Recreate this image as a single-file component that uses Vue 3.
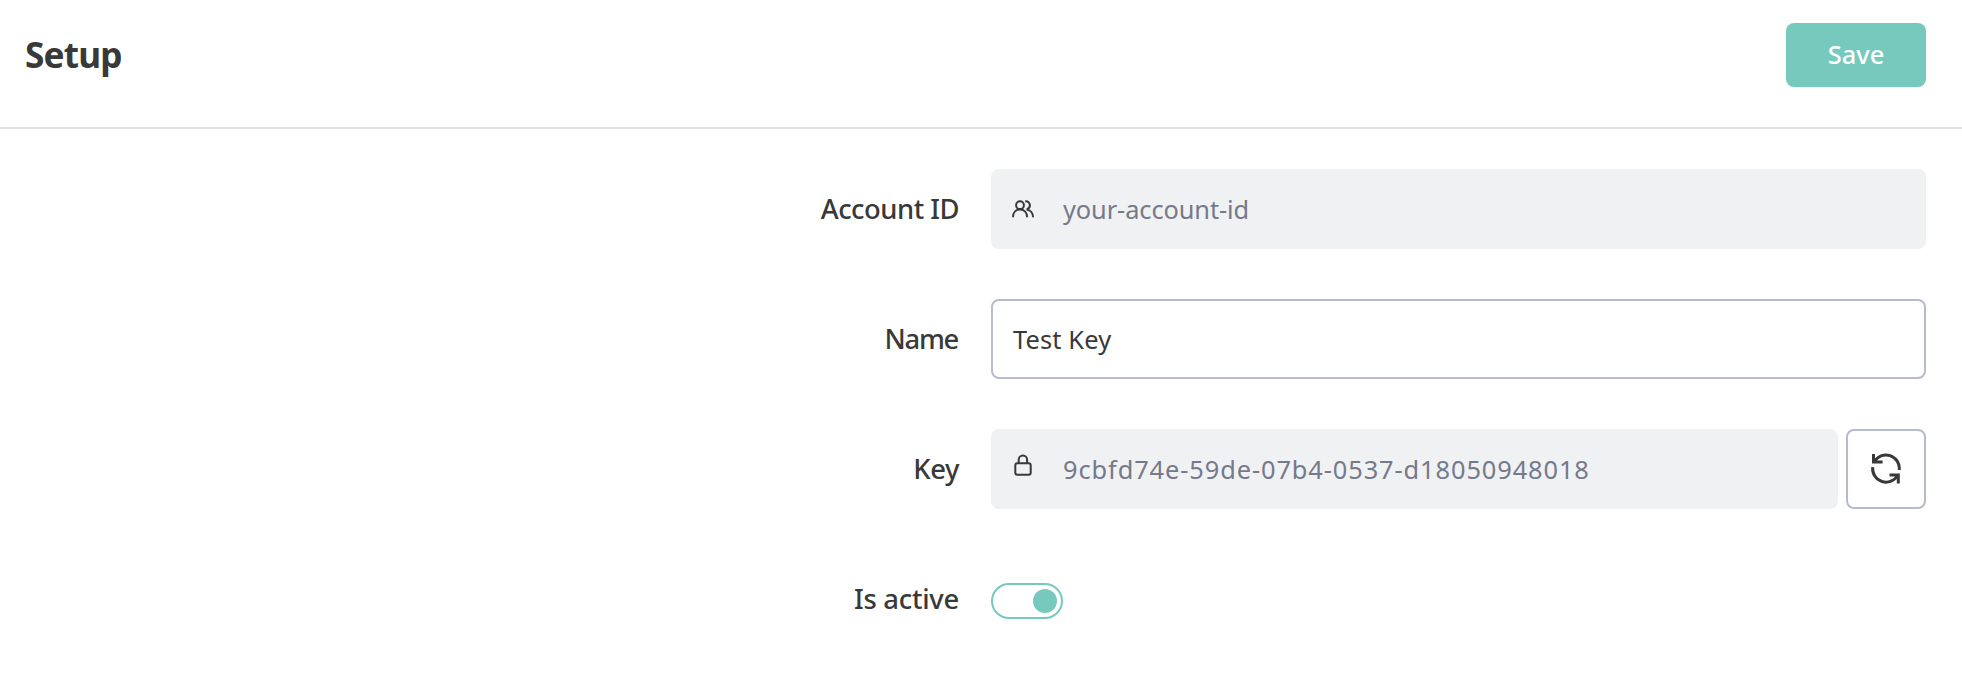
<script setup>
import { ref } from 'vue'

const accountId = 'your-account-id'
const name = 'Test Key'
const apiKey = '9cbfd74e-59de-07b4-0537-d18050948018'
const active = ref(true)
</script>

<template>
  <main class="page">
    <header class="header">
      <h1 class="title">Setup</h1>
      <button class="save" type="button"><span>Save</span></button>
    </header>
    <section class="form">
      <div class="row">
        <div class="label"><span class="l-account">Account ID</span></div>
        <div class="field readonly">
          <svg class="icon" viewBox="0 0 24 24" fill="none" stroke="#393939" stroke-width="2">
            <circle cx="9" cy="8.2" r="3.9" />
            <path d="M2 20.2c0-4.6 2.8-7.7 7-7.7s7.1 3.1 7.1 7.7" />
            <path d="M14.2 4.4c2.6-.3 4.7 1.4 4.7 3.8 0 2.1-1.3 3.7-3.3 4.2 3.7.5 6.4 3.5 6.4 7.8" />
          </svg>
          <span class="v-account">{{ accountId }}</span>
        </div>
      </div>
      <div class="row">
        <div class="label"><span class="l-name">Name</span></div>
        <div class="field editable"><span class="v-name">{{ name }}</span></div>
      </div>
      <div class="row">
        <div class="label"><span class="l-key">Key</span></div>
        <div class="field readonly">
          <svg class="icon lock" viewBox="0 0 24 24" fill="none" stroke="#393939" stroke-width="2">
            <rect x="4.3" y="10.3" width="15.4" height="11.4" rx="2" />
            <path d="M7.7 10V6.7a4.2 4.2 0 0 1 8.4 0V10" />
          </svg>
          <span class="v-key">{{ apiKey }}</span>
        </div>
        <button class="refresh" type="button" aria-label="Regenerate key">
          <svg viewBox="0 0 32 32" fill="none" stroke="#393939" stroke-width="3">
            <path d="M4.2 8.8A13.4 13.4 0 0 1 29.2 17" />
            <path d="M3.5 1V8.9H12.6" />
            <path d="M2.7 14.2A13.4 13.4 0 0 0 27.8 22.1" />
            <path d="M19.5 22.1H28.3V30.4" />
          </svg>
        </button>
      </div>
      <div class="row">
        <div class="label"><span class="l-active">Is active</span></div>
        <button class="toggle" :class="{ on: active }" type="button" role="switch" :aria-checked="active" aria-label="Is active" @click="active = !active">
          <span class="knob"></span>
        </button>
      </div>
    </section>
  </main>
</template>

<style>
body { margin: 0; background: #fff; }
</style>

<style scoped>
.page {
  box-sizing: border-box;
  width: 1962px;
  height: 686px;
  overflow: hidden;
  background: #fff;
  color: #393939;
  font-family: "Noto Sans", "Open Sans", sans-serif;
}
button { font: inherit; padding: 0; box-sizing: border-box; cursor: pointer; }
.header {
  box-sizing: border-box;
  height: 129px;
  padding: 23px 36px 0 24px;
  display: flex;
  align-items: flex-start;
  justify-content: space-between;
  border-bottom: 2px solid #e0e0e5;
}
.title { margin: 0; padding-left: 1px; font-size: 35.2px; line-height: 63px; font-weight: 700; letter-spacing: -0.8px; }
.save {
  width: 140px;
  height: 64px;
  padding-bottom: 2px;
  border: 0;
  border-radius: 8px;
  background: #77c9be;
  color: #fff;
  font-size: 25.4px;
  font-weight: 500;
}
.form { padding: 40px 36px 0 0; display: flex; flex-direction: column; gap: 50px; }
.row { display: flex; align-items: center; height: 80px; }
.label {
  flex: none;
  width: 959px;
  margin-right: 32px;
  text-align: right;
  font-size: 27.4px;
  font-weight: 500;
  line-height: 80px;
  white-space: nowrap;
}
.l-account { letter-spacing: -0.5px; }
.l-name { letter-spacing: -1.3px; padding-right: 1px; }
.l-key { letter-spacing: -0.4px; }
.l-active { letter-spacing: -0.25px; }
.field {
  box-sizing: border-box;
  flex: 1;
  height: 80px;
  border-radius: 8px;
  display: flex;
  align-items: center;
  font-size: 25.4px;
  font-weight: 400;
  line-height: 80px;
  white-space: nowrap;
}
.readonly { background: #f0f1f3; color: #757a8a; padding-left: 20px; }
.editable { border: 2px solid #b8bacd; padding-left: 20px; }
.v-account { letter-spacing: -0.1px; }
.v-name { letter-spacing: 0.15px; }
.v-key { letter-spacing: 0.9px; }
.icon { width: 24px; height: 24px; flex: none; margin-right: 28px; }
.lock { margin-bottom: 8px; }
.refresh {
  flex: none;
  width: 80px;
  height: 80px;
  margin-left: 8px;
  border: 2px solid #b8bacd;
  border-radius: 8px;
  background: #fff;
  display: grid;
  place-items: center;
}
.refresh svg { width: 32px; height: 32px; }
.toggle {
  width: 72px;
  height: 36px;
  margin-top: 4px;
  padding: 0 4px;
  border: 2px solid #77c9be;
  border-radius: 18px;
  background: #fff;
  display: flex;
  align-items: center;
}
.toggle.on { justify-content: flex-end; }
.knob { width: 24px; height: 24px; border-radius: 50%; background: #77c9be; }
</style>
